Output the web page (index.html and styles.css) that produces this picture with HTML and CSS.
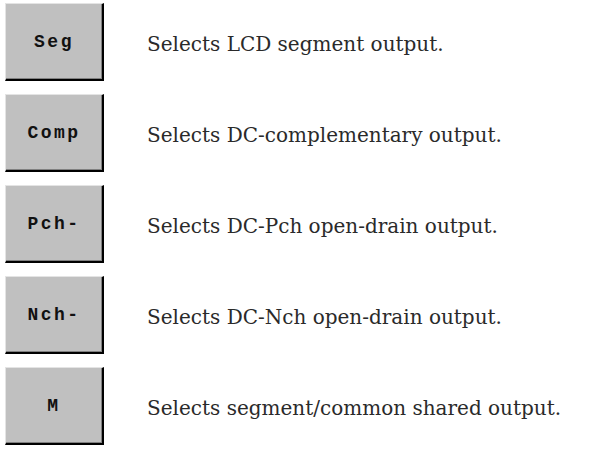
FILE: index.html
```html
<!DOCTYPE html>
<html lang="en">
<head>
<meta charset="utf-8">
<title>Output modes</title>
<link rel="stylesheet" href="styles.css">
</head>
<body>
<div class="list">
  <div class="row"><div class="btn">Seg</div><p class="desc">Selects LCD segment output.</p></div>
  <div class="row"><div class="btn">Comp</div><p class="desc">Selects DC-complementary output.</p></div>
  <div class="row"><div class="btn">Pch-</div><p class="desc">Selects DC-Pch open-drain output.</p></div>
  <div class="row"><div class="btn">Nch-</div><p class="desc">Selects DC-Nch open-drain output.</p></div>
  <div class="row"><div class="btn">M</div><p class="desc">Selects segment/common shared output.</p></div>
</div>
</body>
</html>
```
FILE: styles.css
```css
html, body {
  margin: 0;
  padding: 0;
  background: #ffffff;
}
.list {
  display: flex;
  flex-direction: column;
  gap: 13px;
  padding: 3px 0 0 5px;
}
.row {
  display: flex;
  align-items: center;
  height: 78px;
}
.btn {
  box-sizing: border-box;
  width: 99px;
  height: 78px;
  flex: none;
  background: #c0c0c0;
  border-style: solid;
  border-width: 1px 2px 2px 1px;
  border-color: #e4e4e4 #000 #000 #e4e4e4;
  box-shadow: inset -1px -1px #808080;
  display: flex;
  align-items: center;
  justify-content: center;
  font-family: "Liberation Mono", monospace;
  font-weight: bold;
  font-size: 18px;
  letter-spacing: 2.5px;
  color: #111;
}
.desc {
  margin: 4px 0 0 43px;
  font-family: "DejaVu Serif", serif;
  font-size: 20px;
  color: #2a2a2a;
}
```
